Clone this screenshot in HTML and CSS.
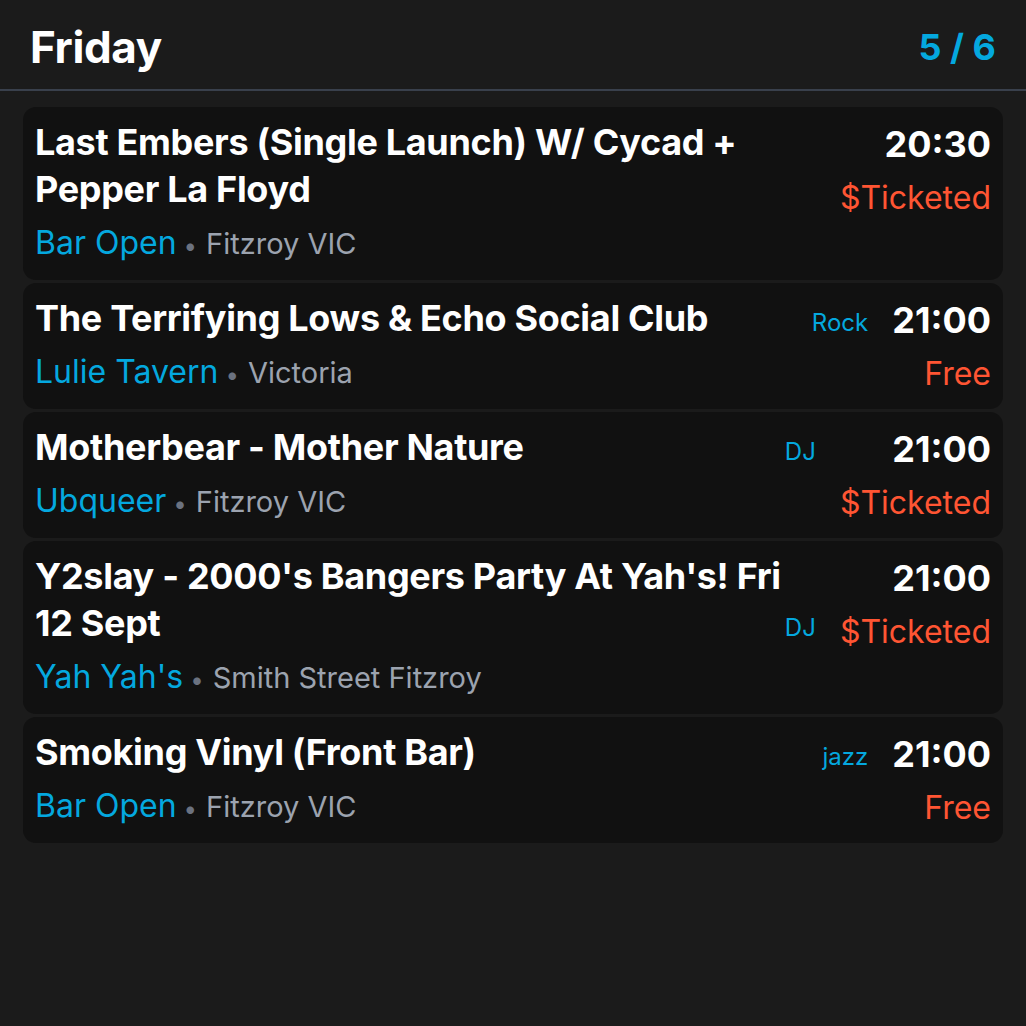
FILE: index.html
```html
<!DOCTYPE html>
<html lang="en">
<head>
<meta charset="utf-8">
<title>Friday</title>
<link rel="stylesheet" href="styles.css">
</head>
<body>
<div class="app">
  <header class="day-header">
    <h1 class="day-title">Friday</h1>
    <span class="day-count">5 / 6</span>
  </header>
  <ul class="events">
    <li class="event">
      <div class="event-main">
        <div class="title-row">
          <h2 class="event-title">Last Embers (Single Launch) W/ Cycad + Pepper La Floyd</h2>
        </div>
        <div class="venue"><span class="venue-name">Bar Open</span> <span class="sep">•</span> <span class="venue-loc">Fitzroy VIC</span></div>
      </div>
      <div class="event-side">
        <div class="time">20:30</div>
        <div class="price">$Ticketed</div>
      </div>
    </li>
    <li class="event">
      <div class="event-main">
        <div class="title-row">
          <h2 class="event-title">The Terrifying Lows &amp; Echo Social Club</h2>
          <span class="tag">Rock</span>
        </div>
        <div class="venue"><span class="venue-name">Lulie Tavern</span> <span class="sep">•</span> <span class="venue-loc">Victoria</span></div>
      </div>
      <div class="event-side">
        <div class="time">21:00</div>
        <div class="price">Free</div>
      </div>
    </li>
    <li class="event">
      <div class="event-main">
        <div class="title-row">
          <h2 class="event-title">Motherbear - Mother Nature</h2>
          <span class="tag">DJ</span>
        </div>
        <div class="venue"><span class="venue-name">Ubqueer</span> <span class="sep">•</span> <span class="venue-loc">Fitzroy VIC</span></div>
      </div>
      <div class="event-side">
        <div class="time">21:00</div>
        <div class="price">$Ticketed</div>
      </div>
    </li>
    <li class="event">
      <div class="event-main">
        <div class="title-row">
          <h2 class="event-title">Y2slay - 2000's Bangers Party At Yah's! Fri 12 Sept</h2>
          <span class="tag">DJ</span>
        </div>
        <div class="venue"><span class="venue-name">Yah Yah's</span> <span class="sep">•</span> <span class="venue-loc">Smith Street Fitzroy</span></div>
      </div>
      <div class="event-side">
        <div class="time">21:00</div>
        <div class="price">$Ticketed</div>
      </div>
    </li>
    <li class="event">
      <div class="event-main">
        <div class="title-row">
          <h2 class="event-title">Smoking Vinyl (Front Bar)</h2>
          <span class="tag">jazz</span>
        </div>
        <div class="venue"><span class="venue-name">Bar Open</span> <span class="sep">•</span> <span class="venue-loc">Fitzroy VIC</span></div>
      </div>
      <div class="event-side">
        <div class="time">21:00</div>
        <div class="price">Free</div>
      </div>
    </li>
  </ul>
</div>
</body>
</html>
```
FILE: styles.css
```css
* { box-sizing: border-box; }
html, body {
  margin: 0;
  padding: 0;
  background: #1b1b1b;
}
body {
  font-family: Inter, "Noto Sans", "Liberation Sans", sans-serif;
  color: #ffffff;
  width: 1026px;
  height: 1026px;
}
.app {
  background: #1b1b1b;
}
.day-header {
  display: flex;
  justify-content: space-between;
  align-items: center;
  height: 91px;
  padding: 4px 30px 0 30px;
  border-bottom: 2px solid #39404c;
}
.day-title {
  margin: 0;
  font-size: 44px;
  line-height: 44px;
  font-weight: 700;
  letter-spacing: -0.4px;
  color: #ffffff;
}
.day-count {
  font-size: 36px;
  line-height: 36px;
  font-weight: 700;
  color: #04a8df;
}
.events {
  list-style: none;
  margin: 0;
  padding: 16px 23px;
  display: flex;
  flex-direction: column;
  gap: 3px;
}
.event {
  display: flex;
  gap: 24px;
  background: #111111;
  border-radius: 13px;
  padding: 12px 12px 15px 12px;
}
.event-main {
  flex: 1;
  min-width: 0;
}
.title-row {
  display: flex;
  align-items: last baseline;
  gap: 4px;
}
.event-title {
  flex: 1;
  margin: 0;
  font-size: 36px;
  line-height: 47px;
  font-weight: 700;
  letter-spacing: -0.32px;
  color: #ffffff;
}
.tag {
  flex: none;
  font-size: 24px;
  line-height: 32px;
  color: #04a8df;
  white-space: nowrap;
}
.venue {
  margin-top: 8px;
  font-size: 32px;
  line-height: 44px;
  height: 44px;
  white-space: nowrap;
}
.venue-name {
  color: #04a8df;
  line-height: 1;
  margin-right: -2px;
}
.sep {
  font-size: 24px;
  line-height: 1;
  color: #6b7280;
}
.venue-loc {
  font-size: 29px;
  line-height: 1;
  color: #9ca3af;
}
.event-side {
  flex: none;
  text-align: right;
  padding-top: 2px;
}
.time {
  font-size: 36px;
  line-height: 46px;
  font-weight: 700;
  color: #ffffff;
}
.price {
  margin-top: 11px;
  font-size: 32px;
  line-height: 40px;
  color: #ff5533;
  white-space: nowrap;
}
```
